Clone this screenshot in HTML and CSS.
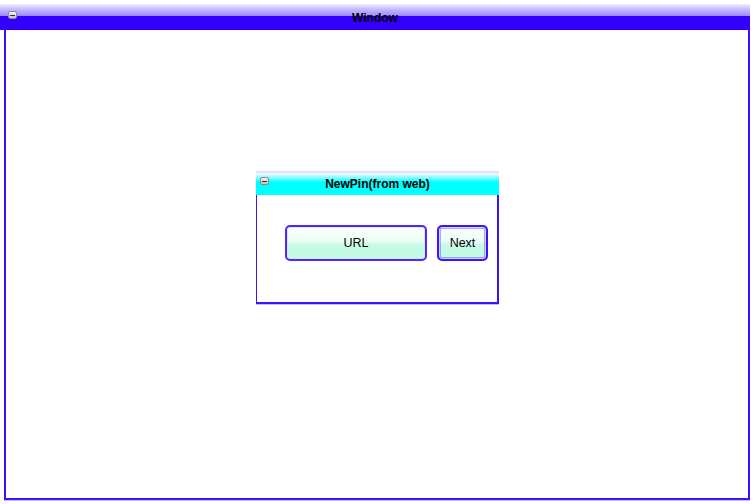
FILE: index.html
```
<!DOCTYPE html>
<html>
<head>
<meta charset="utf-8">
<link rel="stylesheet" href="styles.css">
</head>
<body>
<div class="window">
  <div class="titlebar">
    <span class="min-btn"></span>
    <span class="title">Window</span>
  </div>
  <div class="content">
    <div class="dialog">
      <div class="dlg-titlebar">
        <span class="min-btn small"></span>
        <span class="dlg-title">NewPin(from web)</span>
      </div>
      <div class="dlg-body">
        <button class="btn btn-url">URL</button>
        <button class="btn btn-next">Next</button>
      </div>
    </div>
  </div>
</div>
</body>
</html>
```
FILE: styles.css
```
html, body {
  margin: 0;
  padding: 0;
  background: #ffffff;
}
body {
  width: 755px;
  height: 504px;
  overflow: hidden;
  font-family: "Liberation Sans", Arial, sans-serif;
}
.window {
  width: 750px;
  height: 496px;
  margin-top: 4px;
  display: flex;
  flex-direction: column;
}
.titlebar {
  position: relative;
  height: 26px;
  flex: none;
  background: linear-gradient(#f2eeff 0px, #c8bcff 5px, #a28eff 11px, #9a84ff 12px, #3300ff 12px, #3300ff 100%);
  display: flex;
  align-items: center;
  justify-content: center;
}
.title {
  font-weight: bold;
  font-size: 12px;
  color: #000;
  margin-top: 1px;
}
.min-btn {
  position: absolute;
  left: 8px;
  top: 7px;
  width: 9px;
  height: 8px;
  border-radius: 2px;
  background: linear-gradient(#f6f6f6, #c0c0c0);
  border: 1px solid #8a8a8a;
  box-sizing: border-box;
}
.min-btn::after {
  content: "";
  position: absolute;
  left: 1px;
  right: 1px;
  top: 2.5px;
  height: 1.5px;
  background: #333;
}
.min-btn.small {
  left: 4px;
  top: 6px;
}
.content {
  position: relative;
  flex: 1;
  margin-left: 4px;
  border-left: 2px solid #3a14ff;
  border-right: 2px solid #3a14ff;
  border-bottom: 2px solid #3a14ff;
  box-shadow: 0 1px 0 #c4b8ff;
}
.dialog {
  position: absolute;
  left: 250px;
  top: 141px;
  width: 243px;
  display: flex;
  flex-direction: column;
}
.dlg-titlebar {
  position: relative;
  height: 24px;
  background: linear-gradient(#dcd4ff 0px, #eafcff 3px, #7ffcff 7px, #00ffff 11px, #00ffff 100%);
  display: flex;
  align-items: center;
  justify-content: center;
}
.dlg-title {
  font-weight: bold;
  font-size: 12px;
  color: #000;
  margin-top: 2px;
}
.dlg-body {
  box-sizing: border-box;
  height: 109px;
  border-left: 1.5px solid #3a14ff;
  border-right: 2px solid #3a14ff;
  border-bottom: 2px solid #3a14ff;
  box-shadow: 0 1px 0 #c4b8ff;
  display: flex;
  align-items: flex-start;
  padding: 30px 9px 0 28px;
  gap: 10px;
}
.btn {
  height: 36px;
  font-family: "Liberation Sans", Arial, sans-serif;
  font-size: 12.5px;
  color: #000;
  border: 2px solid #4a2cf4;
  border-radius: 5px;
  background: linear-gradient(#fbfffe 0%, #eafdf5 45%, #c6fbe6 55%, #c2fbe4 100%);
  padding: 0;
  margin: 0;
}
.btn-url {
  width: 142px;
  box-shadow: inset 0 0 0 1px #e6e0ff;
}
.btn-next {
  width: 51px;
  border: 2px solid #3a14ff;
  box-shadow: inset 0 0 0 1px #d8d0ff, inset 0 0 0 1.5px #6a50ff;
  border-radius: 5px;
}
```
